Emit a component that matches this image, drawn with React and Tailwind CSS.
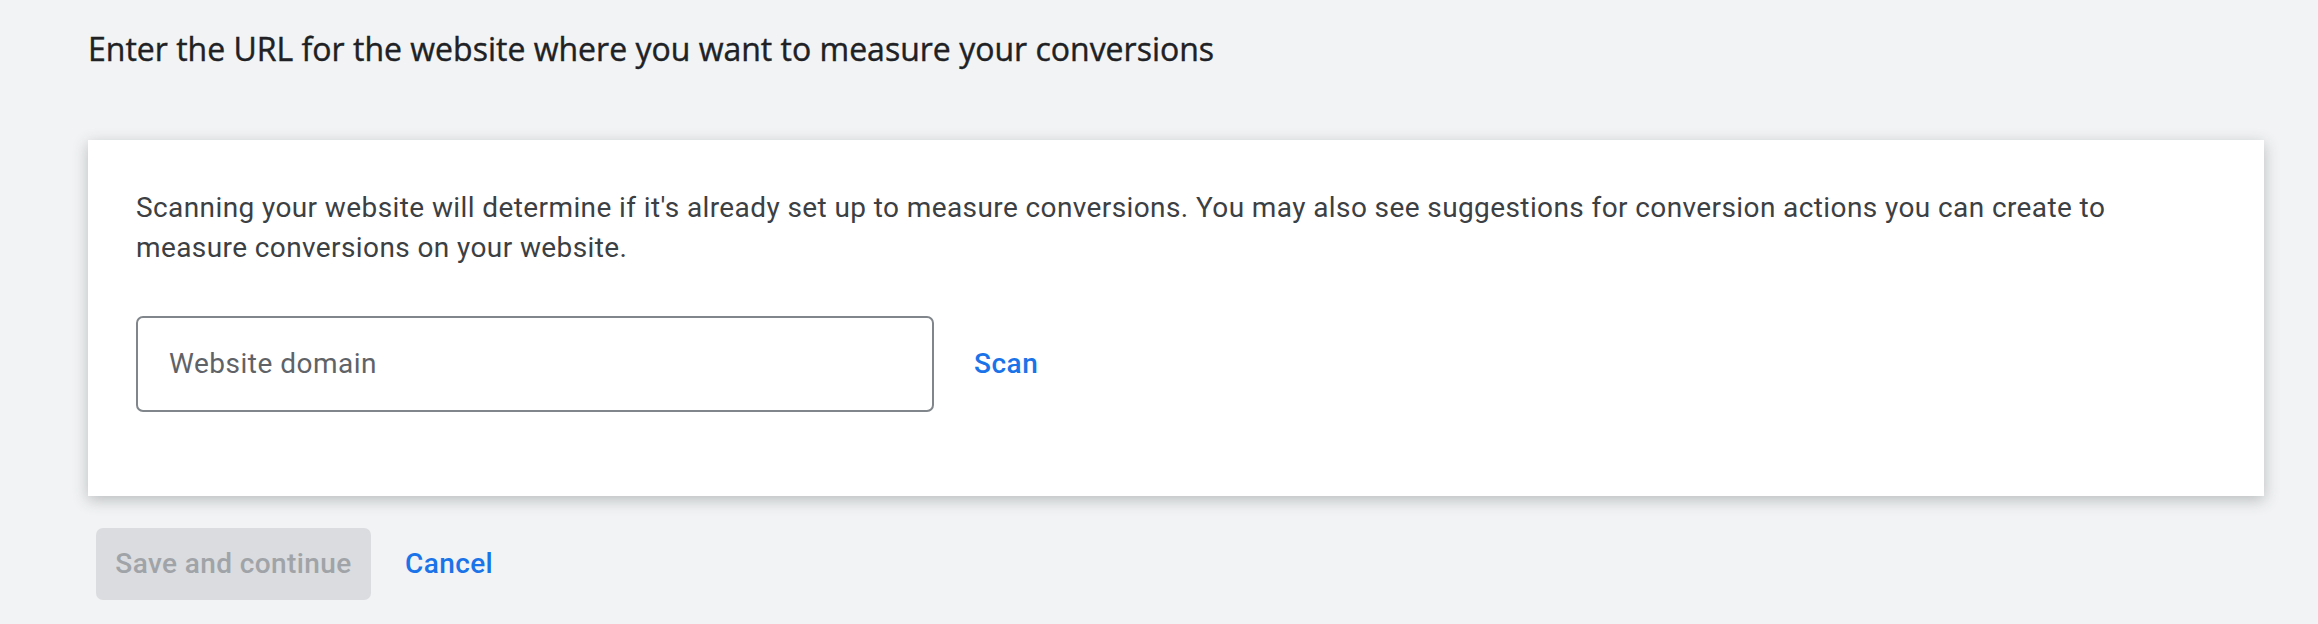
export default function App() {
  return (
    <div className="min-h-[624px] w-full bg-[#f1f3f4] font-['Roboto',sans-serif] text-[#3c4043]">
      <div className="pl-[88px] pr-[54px] pt-[25px]">
        <h1 className="font-['Open_Sans',sans-serif] text-[32px] font-medium leading-[48px] text-[#202124] [-webkit-text-stroke:0.4px_#202124]">
          Enter the URL for the website where you want to measure your conversions
        </h1>

        <div className="mt-[67px] bg-white px-[48px] pt-[48px] pb-[84px] shadow-[0_4px_14px_rgba(60,64,67,0.3)]">
          <p className="text-[28px] leading-[40px] tracking-[0.4px]">
            Scanning your website will determine if it's already set up to measure conversions. You may also see
            suggestions for conversion actions you can create to measure conversions on your website.
          </p>

          <div className="mt-[48px] flex items-center gap-[40px]">
            <div className="flex h-[96px] w-[798px] items-center rounded-[7px] border-2 border-[#80868b] px-[31px]">
              <span className="text-[28px] tracking-[0.5px] text-[#5f6368]">Website domain</span>
            </div>
            <button className="text-[28px] font-medium tracking-[0.5px] text-[#1a73e8]">Scan</button>
          </div>
        </div>

        <div className="mt-[32px] flex items-center gap-[34px] pl-[8px]">
          <button className="h-[72px] w-[275px] rounded-[7px] bg-[#dadcdf] text-[28px] font-medium tracking-[0.4px] text-[#a0a4a8]">
            Save and continue
          </button>
          <button className="text-[28px] font-medium tracking-[0.4px] text-[#1a73e8]">Cancel</button>
        </div>
      </div>
    </div>
  );
}
